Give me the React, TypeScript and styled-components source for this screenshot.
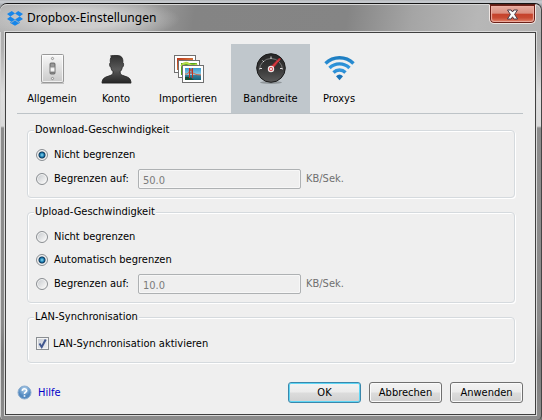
import React, { useState } from "react";
import styled, { createGlobalStyle } from "styled-components";

const GlobalStyle = createGlobalStyle`
  * { box-sizing: border-box; }
  body {
    margin: 0;
    background: linear-gradient(#b4b7bb, #c9cdd2 2px, #9a9da1 6px, #777 100%);
    color: #000;
    font: 11px/14px "DejaVu Sans Condensed", "DejaVu Sans", sans-serif;
  }
  button, input { font: inherit; }
`;

const Frame = styled.div`
  display: flex;
  flex-direction: column;
  min-height: calc(100vh - 3px);
  margin-top: 3px;
  padding: 0 5px 5px;
  border-top: 1px solid #151515;
  border-right: 1px solid #454545;
  border-radius: 7px 7px 5px 5px;
  box-shadow: inset 1px 1px 0 #d6d6d6;
  background: linear-gradient(
    #aaa 0,
    #b0b0b0 45px,
    #dedede 90px,
    #dadada 122px,
    #8c8c8c 124px,
    #8b8b8b 320px,
    #7a7a7a 350px,
    #8c8c8c 100%
  );
`;

const TitleBar = styled.header`
  display: flex;
  align-items: flex-start;
  height: 28px;
  margin: 0 -5px;
  padding: 0 5px 0 7px;
  border-radius: 7px 7px 0 0;
  box-shadow: inset 0 1px 0 #d6d6d6;
  background:
    radial-gradient(ellipse 100px 22px at 80px 15px, rgba(210, 210, 210, 0.9) 40%, rgba(200, 200, 200, 0) 100%),
    linear-gradient(100deg, #b2b2b2 0, #a0a0a0 26%, #848484 36%, #858585 64%, #a5a5a5 76%, #b7b7b7 88%, #b2b2b2 100%);
`;

const Title = styled.h1`
  display: flex;
  align-items: center;
  gap: 4px;
  flex: 1;
  height: 28px;
  margin: 0;
  font: 12px/16px "Noto Sans", "Open Sans", sans-serif;
`;

const CloseButton = styled.button`
  display: flex;
  align-items: center;
  justify-content: center;
  width: 47px;
  height: 20px;
  padding: 0;
  border: 1px solid #efe6e3;
  border-top: 1px solid #5b2018;
  border-radius: 0 0 5px 5px;
  box-shadow: inset 0 0 0 1px #6b2018, inset 0 0 1px 2px #eeb0a4;
  background: linear-gradient(#e8b0a4, #da8f80 46%, #c5412b 50%, #c84a32 70%, #e58a70);
`;

const Panel = styled.main`
  display: flex;
  flex-direction: column;
  flex: 1;
  padding: 11px 12px 11px 11px;
  border: 1px solid #404040;
  box-shadow: 0 0 0 1px #d9d9d9;
  background: #efefef;
`;

const Tabs = styled.nav`
  display: flex;
  border-bottom: 1px solid #bdc3c7;
`;

const Tab = styled.button<{ $width: number; $active: boolean }>`
  display: flex;
  flex-direction: column;
  align-items: center;
  gap: 8px;
  width: ${(p) => p.$width}px;
  height: 69px;
  padding: 8px 0 7px;
  border: 0;
  color: #000;
  white-space: nowrap;
  background: ${(p) => (p.$active ? "#c0c7cc" : "transparent")};
`;

const Group = styled.fieldset<{ $first?: boolean }>`
  display: flex;
  flex-direction: column;
  gap: 3px;
  min-width: 0;
  margin: ${(p) => (p.$first ? 9 : 7)}px 8px 0 10px;
  padding: 8px 8px 7px;
  border: 1px solid #d5dade;
  border-radius: 4px;
  box-shadow: inset 1px 1px 0 #fff, 1px 1px 0 #fff;
`;

const Legend = styled.legend`
  margin-left: -2px;
  padding: 0 1px;
  background: #efefef;
`;

const Row = styled.div<{ $height: number }>`
  display: flex;
  align-items: center;
  height: ${(p) => p.$height}px;
`;

const Choice = styled.label<{ $fixed?: boolean }>`
  display: flex;
  align-items: center;
  gap: 6px;
  width: ${(p) => (p.$fixed ? "102px" : "auto")};
  white-space: nowrap;
`;

const RadioInput = styled.input`
  appearance: none;
  flex: none;
  width: 12px;
  height: 12px;
  margin: 0;
  border: 1px solid #8a8e92;
  border-radius: 50%;
  box-shadow: inset 0 0 0 1px #f4f4f4;
  background: linear-gradient(135deg, #c3c7cb, #f4f4f4 80%);

  &:checked {
    background: radial-gradient(circle at 5px 5px, #8fdcf5 0, #1c7db0 2px, #0d3a60 3px, #17364f 3px, #dfe3e6 4px);
  }
`;

const CheckInput = styled.input`
  appearance: none;
  flex: none;
  width: 13px;
  height: 13px;
  margin: 0;
  border: 1px solid #8a8e92;
  box-shadow: inset 0 0 0 1px #f4f4f4;
  background: linear-gradient(135deg, #c5cad2, #f2f3f5);
`;

const CheckLabel = styled.label`
  display: grid;
  grid-template-columns: 13px auto;
  align-items: center;
  column-gap: 4px;

  input, svg { grid-area: 1 / 1; }
  svg { display: none; z-index: 1; pointer-events: none; }
  input:checked + svg { display: block; }
`;

const RateInput = styled.input`
  width: 163px;
  height: 20px;
  padding: 2px 4px 0;
  border: 1px solid #aeb1b3;
  border-radius: 2px;
  color: #7b7b7b;
  background: #efefef;
  box-shadow: inset 0 0 0 1px #f7f7f7;
`;

const Unit = styled.span`
  margin-left: 5px;
  color: #707070;
`;

const Footer = styled.footer`
  display: flex;
  align-items: center;
  gap: 8px;
  margin-top: auto;
  padding-top: 17px;
`;

const HelpLink = styled.a`
  display: flex;
  align-items: center;
  gap: 6px;
  margin-right: auto;
  color: #0000c8;
  text-decoration: none;
`;

const PushButton = styled.button<{ $primary?: boolean }>`
  width: 73px;
  height: 21px;
  padding: 0;
  border: 1px solid ${(p) => (p.$primary ? "#3a87ab" : "#707070")};
  border-radius: 3px;
  color: #000;
  box-shadow: inset 0 0 0 1px ${(p) => (p.$primary ? "#5fd6f5" : "#fafafa")};
  background: linear-gradient(#f3f3f3, #ebebeb 48%, #dcdcdc 52%, #d0d0d0);
`;

const DropboxLogo = () => (
  <svg width="16" height="16" viewBox="0 0 16 16" fill="#1686ea" aria-hidden="true">
    <path d="M4.8 1 8 3.6 3.3 6.5 0 3.9zM11.2 1 8 3.6l4.7 2.9L16 3.9zM0 9.1l3.3-2.6L8 9.4 4.8 12zM16 9.1l-3.3-2.6L8 9.4l3.2 2.6zM8 10.2l3.2 2.6 1.5-1v1.1L8 15.8l-4.7-2.9v-1.1l1.5 1z" />
  </svg>
);

const CloseIcon = () => (
  <svg width="13" height="11" viewBox="0 0 13 11" aria-hidden="true">
    <path
      d="M1.5 1h3.7l1.3 2 1.3-2h3.7L8.6 5.4l3 4.6H7.8L6.5 7.8 5.2 10H1.4l3-4.6z"
      fill="#fafafa"
      stroke="#4d3b45"
      strokeLinejoin="round"
    />
  </svg>
);

const SwitchIcon = () => (
  <svg width="32" height="32" viewBox="0 0 32 32" aria-hidden="true">
    <defs>
      <linearGradient id="plate" x2="0" y2="1">
        <stop stopColor="#f8f8f8" />
        <stop offset="1" stopColor="#c9c9c9" />
      </linearGradient>
      <linearGradient id="lever" x2="0" y2="1">
        <stop stopColor="#777" />
        <stop offset=".4" stopColor="#fff" />
        <stop offset=".7" stopColor="#eee" />
        <stop offset="1" stopColor="#555" />
      </linearGradient>
    </defs>
    <path d="M5 31.5h23" stroke="#999" opacity=".5" />
    <rect x="5.5" y="2.5" width="22" height="28" rx="1" fill="url(#plate)" stroke="#999" />
    <rect x="6.5" y="3.5" width="20" height="26" rx="1" fill="none" stroke="#fff" opacity=".7" />
    <circle cx="16.5" cy="6.5" r="1.1" fill="#eee" stroke="#777" strokeWidth=".7" />
    <circle cx="16.5" cy="26.5" r="1.1" fill="#eee" stroke="#777" strokeWidth=".7" />
    <rect x="14" y="11" width="5" height="11" rx="1" fill="#999" stroke="#555" strokeWidth=".8" />
    <rect x="14.5" y="14" width="4" height="7" rx="1" fill="url(#lever)" />
  </svg>
);

const PersonIcon = () => (
  <svg width="32" height="32" viewBox="0 0 32 32" aria-hidden="true">
    <defs>
      <linearGradient id="person" x2="0" y2="1">
        <stop stopColor="#303030" />
        <stop offset=".5" stopColor="#5a5a5a" />
        <stop offset="1" stopColor="#262626" />
      </linearGradient>
    </defs>
    <path
      d="M17 3.5c4.500 0 6.300 2.400 5.800 7.300l.7.6c.3 1.800-.2 3.300-1.200 4-.4 2-1.200 3.300-2.100 4.200-.2 2.200.4 3 2.200 3.700l5 1.800c2.500 1 3.600 3.300 3.600 6H2c0-2.700 1.200-5 3.800-6l5-1.800c1.800-.7 2.400-1.500 2.200-3.700-1-.9-1.700-2.200-2.100-4.200-1-.7-1.500-2.200-1.200-4l.7-.6c-.4-3 0-4.800 1-5.700-.1-.6-.4-1-.8-1.200 2.200-.6 4-.4 6.400-.4z"
      fill="url(#person)"
      stroke="#1f1f1f"
      strokeWidth=".8"
    />
  </svg>
);

const PhotosIcon = () => (
  <svg width="32" height="32" viewBox="0 0 32 32" aria-hidden="true">
    <defs>
      <linearGradient id="sunset" x2="1" y2="1">
        <stop stopColor="#b93519" />
        <stop offset="1" stopColor="#e9a052" />
      </linearGradient>
      <linearGradient id="sky" x2="0" y2="1">
        <stop stopColor="#399bd0" />
        <stop offset=".6" stopColor="#94d1e6" />
        <stop offset=".62" stopColor="#357f9c" />
        <stop offset="1" stopColor="#16637c" />
      </linearGradient>
    </defs>
    <rect x="2.5" y="3.5" width="21" height="17" fill="#fff" stroke="#707070" />
    <rect x="5" y="6" width="16" height="12" fill="url(#sunset)" />
    <rect x="6.5" y="8.5" width="21" height="17" fill="#fff" stroke="#707070" />
    <rect x="9" y="11" width="16" height="12" fill="#53a51d" />
    <path d="M9 14q4-5 8-2t8 0" stroke="#b6d94b" strokeWidth="2" fill="none" />
    <rect x="10.5" y="13.5" width="21" height="17" fill="#fff" stroke="#707070" />
    <rect x="13" y="16" width="16" height="12" fill="url(#sky)" />
    <path d="M13 28v-3q5-1 9 3z" fill="#174e36" />
    <path d="M13 22q4 1 5-5 2 6 11 6" stroke="#d4674a" fill="none" />
    <path d="M17.5 16v10M20.5 16v10M17.5 18h3M17.5 21h3" stroke="#bd3524" fill="none" />
  </svg>
);

const GaugeIcon = () => (
  <svg width="32" height="32" viewBox="0 0 32 32" aria-hidden="true">
    <defs>
      <linearGradient id="dial" x2="0" y2="1">
        <stop stopColor="#262626" />
        <stop offset=".5" stopColor="#353535" />
        <stop offset="1" stopColor="#5a5a5a" />
      </linearGradient>
    </defs>
    <ellipse cx="16" cy="30.5" rx="11" ry="1.5" fill="#7c8285" opacity=".7" />
    <circle cx="16" cy="16" r="14.3" fill="url(#dial)" stroke="#1b1b1b" />
    <path d="M4.5 18a11.5 11.5 0 1 1 23 0" fill="none" stroke="#aaa" strokeWidth=".6" />
    <path
      d="M16 4.500v2.500M7.500 8.500l1.500 1.500M24.500 8.500l-1.500 1.500M4.500 16.500h2.500M25 16.500h2.500"
      stroke="#ddd"
      fill="none"
    />
    <path d="M15 15.500 24.500 6l1 1-8 10z" fill="#dc3b41" stroke="#a8272c" strokeWidth=".8" />
    <circle cx="16" cy="17" r="2.6" fill="#d93f44" stroke="#f0e6e6" strokeWidth="1.2" />
    <circle cx="16" cy="17" r="1" fill="#fff" />
  </svg>
);

const WifiIcon = () => (
  <svg width="32" height="32" viewBox="0 0 32 32" aria-hidden="true">
    <defs>
      <linearGradient id="waves" gradientUnits="userSpaceOnUse" x1="0" y1="5" x2="0" y2="28">
        <stop stopColor="#1c7cc0" />
        <stop offset=".5" stopColor="#349be2" />
        <stop offset="1" stopColor="#1872b8" />
      </linearGradient>
    </defs>
    <g fill="none" stroke="url(#waves)" strokeWidth="3.4">
      <path d="M2.500 11.500a20 20 0 0 1 28 0" />
      <path d="M6.500 16a14.200 14.200 0 0 1 20 0" />
      <path d="M10.500 20.500a8.600 8.600 0 0 1 12 0" />
    </g>
    <path d="M13 24.200q3.500-3.500 7 0l-3.500 4z" fill="#1872b8" />
  </svg>
);

const HelpIcon = () => (
  <svg width="15" height="15" viewBox="0 0 15 15" aria-hidden="true">
    <defs>
      <radialGradient id="help" cy=".25">
        <stop stopColor="#b5d4ee" />
        <stop offset="1" stopColor="#5389c0" />
      </radialGradient>
    </defs>
    <circle cx="7.5" cy="7.5" r="6.5" fill="url(#help)" stroke="#8daed0" />
    <path d="M5.300 5.800q.2-2 2.200-2t2.200 1.800q0 1-1.200 1.700T7.500 9M7.500 10.200v1.600" fill="none" stroke="#fff" strokeWidth="1.6" />
  </svg>
);

const CheckMark = () => (
  <svg width="13" height="13" viewBox="0 0 13 13" aria-hidden="true">
    <path d="m3.500 6.500 2.200 3.500 4-7.500" fill="none" stroke="#42588f" strokeWidth="2" />
  </svg>
);

const tabs = [
  { name: "Allgemein", width: 70, Icon: SwitchIcon },
  { name: "Konto", width: 58, Icon: PersonIcon },
  { name: "Importieren", width: 86, Icon: PhotosIcon },
  { name: "Bandbreite", width: 79, Icon: GaugeIcon },
  { name: "Proxys", width: 58, Icon: WifiIcon },
];

type RadioProps = {
  group: string;
  value: string;
  label: string;
  selected: string;
  onSelect: (value: string) => void;
  fixed?: boolean;
};

const Radio = ({ group, value, label, selected, onSelect, fixed }: RadioProps) => (
  <Choice $fixed={fixed}>
    <RadioInput type="radio" name={group} value={value} checked={selected === value} onChange={() => onSelect(value)} />
    {label}
  </Choice>
);

export default function App() {
  const [tab, setTab] = useState("Bandbreite");
  const [download, setDownload] = useState("none");
  const [upload, setUpload] = useState("auto");

  return (
    <>
      <GlobalStyle />
      <Frame>
        <TitleBar>
          <Title>
            <DropboxLogo />
            Dropbox-Einstellungen
          </Title>
          <CloseButton aria-label="Schließen">
            <CloseIcon />
          </CloseButton>
        </TitleBar>
        <Panel>
          <Tabs>
            {tabs.map(({ name, width, Icon }) => (
              <Tab key={name} $width={width} $active={tab === name} onClick={() => setTab(name)}>
                <Icon />
                {name}
              </Tab>
            ))}
          </Tabs>

          <Group $first>
            <Legend>Download-Geschwindigkeit</Legend>
            <Row $height={20}>
              <Radio group="download" value="none" label="Nicht begrenzen" selected={download} onSelect={setDownload} />
            </Row>
            <Row $height={22}>
              <Radio group="download" value="limit" label="Begrenzen auf:" selected={download} onSelect={setDownload} fixed />
              <RateInput aria-label="Download begrenzen auf" defaultValue="50.0" disabled={download !== "limit"} />
              <Unit>KB/Sek.</Unit>
            </Row>
          </Group>

          <Group>
            <Legend>Upload-Geschwindigkeit</Legend>
            <Row $height={20}>
              <Radio group="upload" value="none" label="Nicht begrenzen" selected={upload} onSelect={setUpload} />
            </Row>
            <Row $height={20}>
              <Radio group="upload" value="auto" label="Automatisch begrenzen" selected={upload} onSelect={setUpload} />
            </Row>
            <Row $height={22}>
              <Radio group="upload" value="limit" label="Begrenzen auf:" selected={upload} onSelect={setUpload} fixed />
              <RateInput aria-label="Upload begrenzen auf" defaultValue="10.0" disabled={upload !== "limit"} />
              <Unit>KB/Sek.</Unit>
            </Row>
          </Group>

          <Group>
            <Legend>LAN-Synchronisation</Legend>
            <Row $height={23}>
              <CheckLabel>
                <CheckInput type="checkbox" defaultChecked />
                <CheckMark />
                LAN-Synchronisation aktivieren
              </CheckLabel>
            </Row>
          </Group>

          <Footer>
            <HelpLink href="#hilfe">
              <HelpIcon />
              Hilfe
            </HelpLink>
            <PushButton $primary>OK</PushButton>
            <PushButton>Abbrechen</PushButton>
            <PushButton>Anwenden</PushButton>
          </Footer>
        </Panel>
      </Frame>
    </>
  );
}
